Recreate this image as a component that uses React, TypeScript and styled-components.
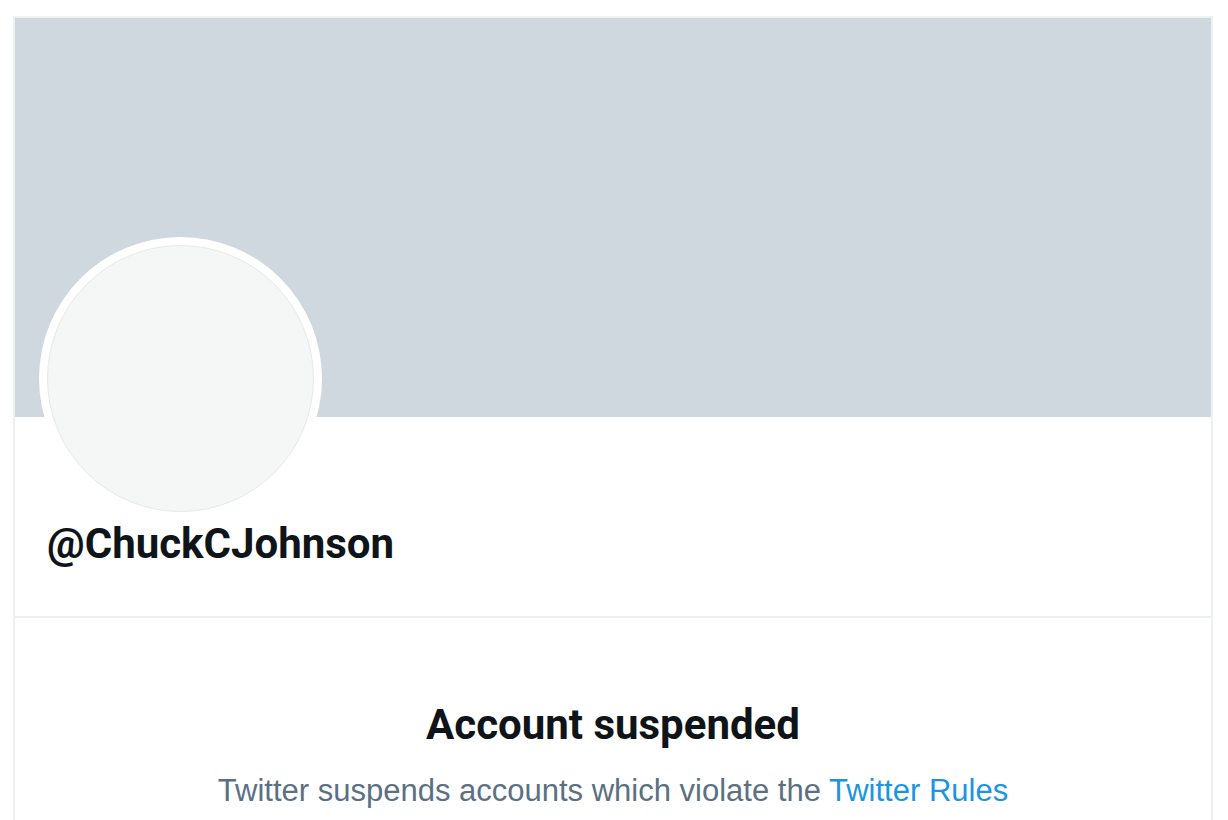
import React from "react";
import styled, { createGlobalStyle } from "styled-components";

const GlobalStyle = createGlobalStyle`
  html, body {
    margin: 0;
    padding: 0;
    background: #ffffff;
  }
  body {
    font-family: "Liberation Sans", Arial, sans-serif;
    color: #14171a;
  }
`;

const Page = styled.div`
  padding-top: 16px;
  padding-left: 13px;
  height: 820px;
  box-sizing: border-box;
  overflow: hidden;
`;

const Column = styled.main`
  width: 1200px;
  box-sizing: border-box;
  border: 2px solid #eef1f2;
  border-bottom: none;
  min-height: 820px;
`;

const Banner = styled.div`
  height: 399px;
  background: #cfd8de;
`;

const ProfileSection = styled.section`
  display: flex;
  flex-direction: column;
  align-items: flex-start;
  padding: 0 24px 47px;
  border-bottom: 2px solid #eef1f2;
`;

const AvatarRing = styled.div`
  width: 283px;
  height: 283px;
  margin-top: -180px;
  box-sizing: border-box;
  padding: 8px;
  border-radius: 50%;
  background: #ffffff;
  position: relative;
`;

const AvatarFace = styled.div`
  width: 100%;
  height: 100%;
  box-sizing: border-box;
  border-radius: 50%;
  background: #f5f7f6;
  border: 1.5px solid #e7e9e9;
`;

const Handle = styled.h1`
  margin: -1px 0 0 8px;
  font-family: Roboto, "Liberation Sans", Arial, sans-serif;
  font-weight: 700;
  font-size: 42px;
  line-height: 50px;
  color: #0f1419;
`;

const NoticeSection = styled.section`
  display: flex;
  flex-direction: column;
  align-items: center;
  padding-top: 82px;
`;

const Title = styled.h2`
  margin: 0;
  font-family: Roboto, "Liberation Sans", Arial, sans-serif;
  font-weight: 700;
  font-size: 42px;
  line-height: 50px;
  color: #0f1419;
`;

const Description = styled.p`
  margin: 21px 0 0;
  font-family: "Liberation Sans", Arial, sans-serif;
  font-size: 31px;
  line-height: 40px;
  color: #5b7083;
`;

const RulesLink = styled.a`
  color: #1b95e0;
  text-decoration: none;
`;

export default function App() {
  return (
    <>
      <GlobalStyle />
      <Page>
        <Column>
          <Banner />
          <ProfileSection>
            <AvatarRing>
              <AvatarFace />
            </AvatarRing>
            <Handle>@ChuckCJohnson</Handle>
          </ProfileSection>
          <NoticeSection>
            <Title>Account suspended</Title>
            <Description>
              Twitter suspends accounts which violate the{" "}
              <RulesLink href="#">Twitter Rules</RulesLink>
            </Description>
          </NoticeSection>
        </Column>
      </Page>
    </>
  );
}
